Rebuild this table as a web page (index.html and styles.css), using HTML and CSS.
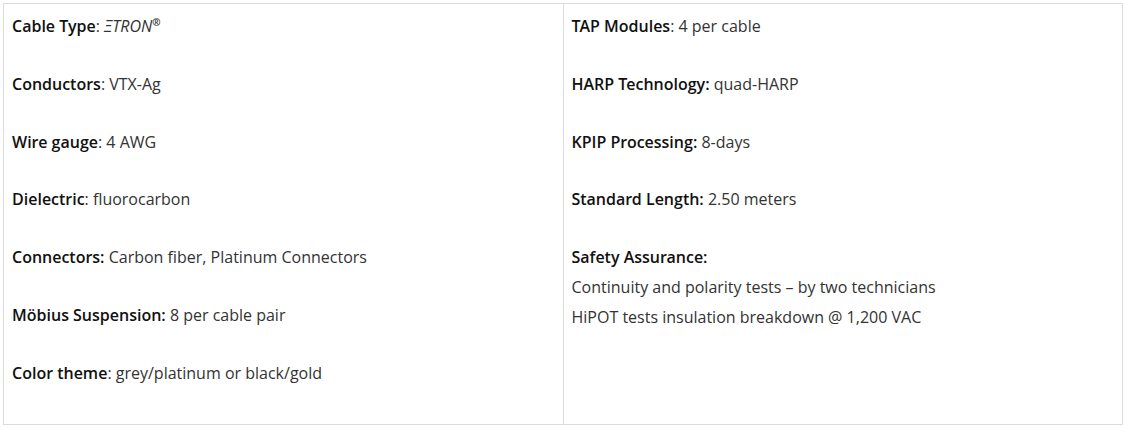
FILE: index.html
```html
<!DOCTYPE html>
<html>
<head>
<meta charset="utf-8">
<link rel="stylesheet" href="styles.css">
</head>
<body>
<table class="specs">
  <tr>
    <td class="cell">
      <p class="row"><strong>Cable Type</strong>: <em>ΞTRON</em><sup class="reg">®</sup></p>
      <p class="row"><strong>Conductors</strong>: VTX-Ag</p>
      <p class="row"><strong>Wire gauge</strong>: 4 AWG</p>
      <p class="row"><strong>Dielectric</strong>: fluorocarbon</p>
      <p class="row"><strong>Connectors:</strong> Carbon fiber, Platinum Connectors</p>
      <p class="row"><strong>Möbius Suspension:</strong> 8 per cable pair</p>
      <p class="row"><strong>Color theme</strong>: grey/platinum or black/gold</p>
    </td>
    <td class="cell">
      <p class="row"><strong>TAP Modules</strong>: 4 per cable</p>
      <p class="row"><strong>HARP Technology:</strong> quad-HARP</p>
      <p class="row"><strong>KPIP Processing:</strong> 8-days</p>
      <p class="row"><strong>Standard Length:</strong> 2.50 meters</p>
      <p class="row"><strong>Safety Assurance:</strong><br>Continuity and polarity tests – by two technicians<br>HiPOT tests insulation breakdown @ 1,200 VAC</p>
    </td>
  </tr>
</table>
</body>
</html>
```
FILE: styles.css
```css
html, body {
  margin: 0;
  padding: 0;
  background: #fff;
}
body {
  padding: 3px;
  font-family: "Open Sans", "Liberation Sans", sans-serif;
  font-size: 16px;
  color: #333;
}
.specs {
  width: 1120px;
  border-collapse: collapse;
  table-layout: fixed;
}
.cell {
  width: 50%;
  vertical-align: top;
  border: 1px solid #dcdcdc;
  padding: 7px 8px 8px 8px;
}
.row {
  margin: 0 0 27.8px 0;
  line-height: 30px;
}
.row strong {
  font-family: "Open Sans SemiBold", "Open Sans", sans-serif;
  font-weight: 600;
  color: #111;
}
.row em {
  font-style: italic;
}
.reg {
  font-size: 10px;
  font-weight: 700;
  font-style: italic;
  line-height: 0;
  vertical-align: 6px;
}
```
